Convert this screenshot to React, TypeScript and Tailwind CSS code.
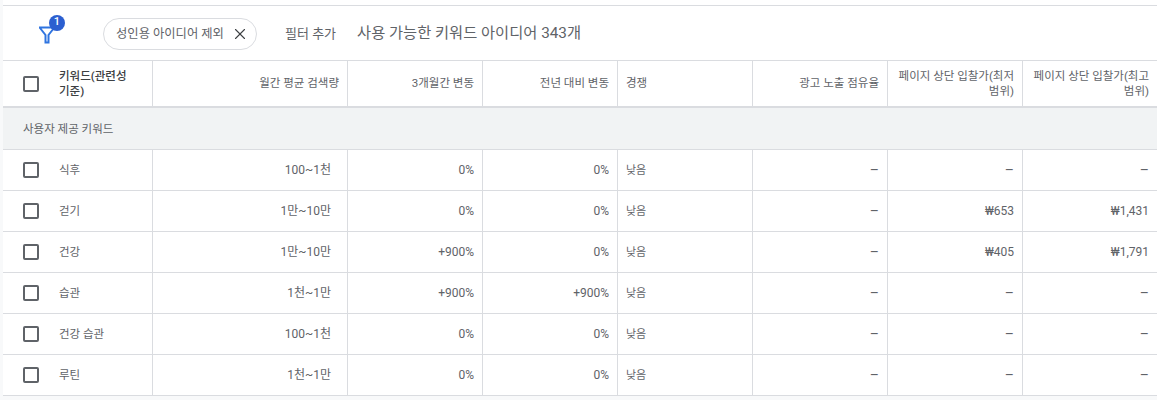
import { X } from "lucide-react"

interface Row {
  keyword: string
  volume: string
  threeMonth: string
  yoy: string
  low: string
  high: string
}

const rows: Row[] = [
  { keyword: "식후", volume: "100~1천", threeMonth: "0%", yoy: "0%", low: "–", high: "–" },
  { keyword: "걷기", volume: "1만~10만", threeMonth: "0%", yoy: "0%", low: "₩653", high: "₩1,431" },
  { keyword: "건강", volume: "1만~10만", threeMonth: "+900%", yoy: "0%", low: "₩405", high: "₩1,791" },
  { keyword: "습관", volume: "1천~1만", threeMonth: "+900%", yoy: "+900%", low: "–", high: "–" },
  { keyword: "건강 습관", volume: "100~1천", threeMonth: "0%", yoy: "0%", low: "–", high: "–" },
  { keyword: "루틴", volume: "1천~1만", threeMonth: "0%", yoy: "0%", low: "–", high: "–" },
]

const gridCols = "grid grid-cols-[150px_195px_135px_135px_135px_135px_135px_134px]"
const cell = "border-r border-[#dadce0] flex items-center"

function Checkbox() {
  return <div className="w-4 h-4 ml-[20px] shrink-0 rounded-[2px] border-2 border-[#5f6368]" />
}

function FilterIcon() {
  return (
    <svg width="18" height="18" viewBox="0 0 18 18" className="text-[#2f74e0]">
      <path d="M1 1.5h16M2 2l5.5 7v7.5h3V9L16 2" fill="none" stroke="currentColor" strokeWidth="2" />
    </svg>
  )
}

function Dash({ value }: { value: string }) {
  return value === "–" ? <span className="text-[14px]">–</span> : <>{value}</>
}

export default function App() {
  return (
    <div className="w-[1157px] h-[400px] overflow-hidden bg-[#f8f9fa] pl-[3px] text-[11.5px] text-[#5f6368] font-['Roboto','Noto_Sans_CJK_KR',sans-serif]">
      <div className="h-[5px] bg-white" />
      <div className="bg-white border-y border-[#dadce0] h-[56px] flex items-center">
        <div className="relative ml-[35px] w-[18px] h-[18px] mt-[3px]">
          <FilterIcon />
          <span className="absolute -top-[11px] left-[11px] w-4 h-4 rounded-full bg-[#2b5fd0] text-white text-[11px] font-medium flex items-center justify-center">1</span>
        </div>
        <div className="ml-[47px] h-8 w-[154px] rounded-full border border-[#dadce0] flex items-center pl-[12px] mt-[1px]">
          <span className="whitespace-nowrap text-[12.3px] mt-[1px]">성인용 아이디어 제외</span>
          <X size={18} strokeWidth={1.5} className="ml-[7px] shrink-0 text-[#3c4043]" />
        </div>
        <span className="ml-[28px] text-[13px] mt-[2px]">필터 추가</span>
        <span className="ml-[21px] text-[15.3px] mt-[1px]">사용 가능한 키워드 아이디어 343개</span>
      </div>

      <div className={`${gridCols} bg-white h-[47px] border-b-2 border-[#dadce0] break-keep`}>
        <div className={cell}>
          <Checkbox />
          <span className="ml-[20px] font-medium text-[#3c4043] leading-[15px] w-[80px]">키워드(관련성 기준)</span>
        </div>
        <div className={`${cell} justify-end pr-[8px]`}>월간 평균 검색량</div>
        <div className={`${cell} justify-end pr-[8px]`}>3개월간 변동</div>
        <div className={`${cell} justify-end pr-[8px]`}>전년 대비 변동</div>
        <div className={`${cell} pl-[8px]`}>경쟁</div>
        <div className={`${cell} justify-end pr-[8px]`}>광고 노출 점유율</div>
        <div className={`${cell} justify-end text-right pl-[8px] pr-[8px] leading-[15px]`}>페이지 상단 입찰가(최저 범위)</div>
        <div className="flex items-center justify-end text-right pl-[8px] pr-[8px] leading-[15px]">페이지 상단 입찰가(최고 범위)</div>
      </div>

      <div className="h-[42px] bg-[#f1f3f4] border-b border-[#dadce0] flex items-center pl-[20px] pt-[2px]">사용자 제공 키워드</div>

      {rows.map((row) => (
        <div key={row.keyword} className={`${gridCols} bg-white h-[41px] border-b border-[#dadce0] text-[12px]`}>
          <div className={cell}>
            <Checkbox />
            <span className="ml-[20px] text-[11.5px] mt-[1px]">{row.keyword}</span>
          </div>
          <div className={`${cell} justify-end pr-[16px]`}>{row.volume}</div>
          <div className={`${cell} justify-end pr-[8px]`}>{row.threeMonth}</div>
          <div className={`${cell} justify-end pr-[8px]`}>{row.yoy}</div>
          <div className={`${cell} pl-[8px] text-[11px] pt-[2px]`}>낮음</div>
          <div className={`${cell} justify-end pr-[8px]`}><Dash value="–" /></div>
          <div className={`${cell} justify-end pr-[8px]`}><Dash value={row.low} /></div>
          <div className="flex items-center justify-end pr-[8px]"><Dash value={row.high} /></div>
        </div>
      ))}
    </div>
  )
}
